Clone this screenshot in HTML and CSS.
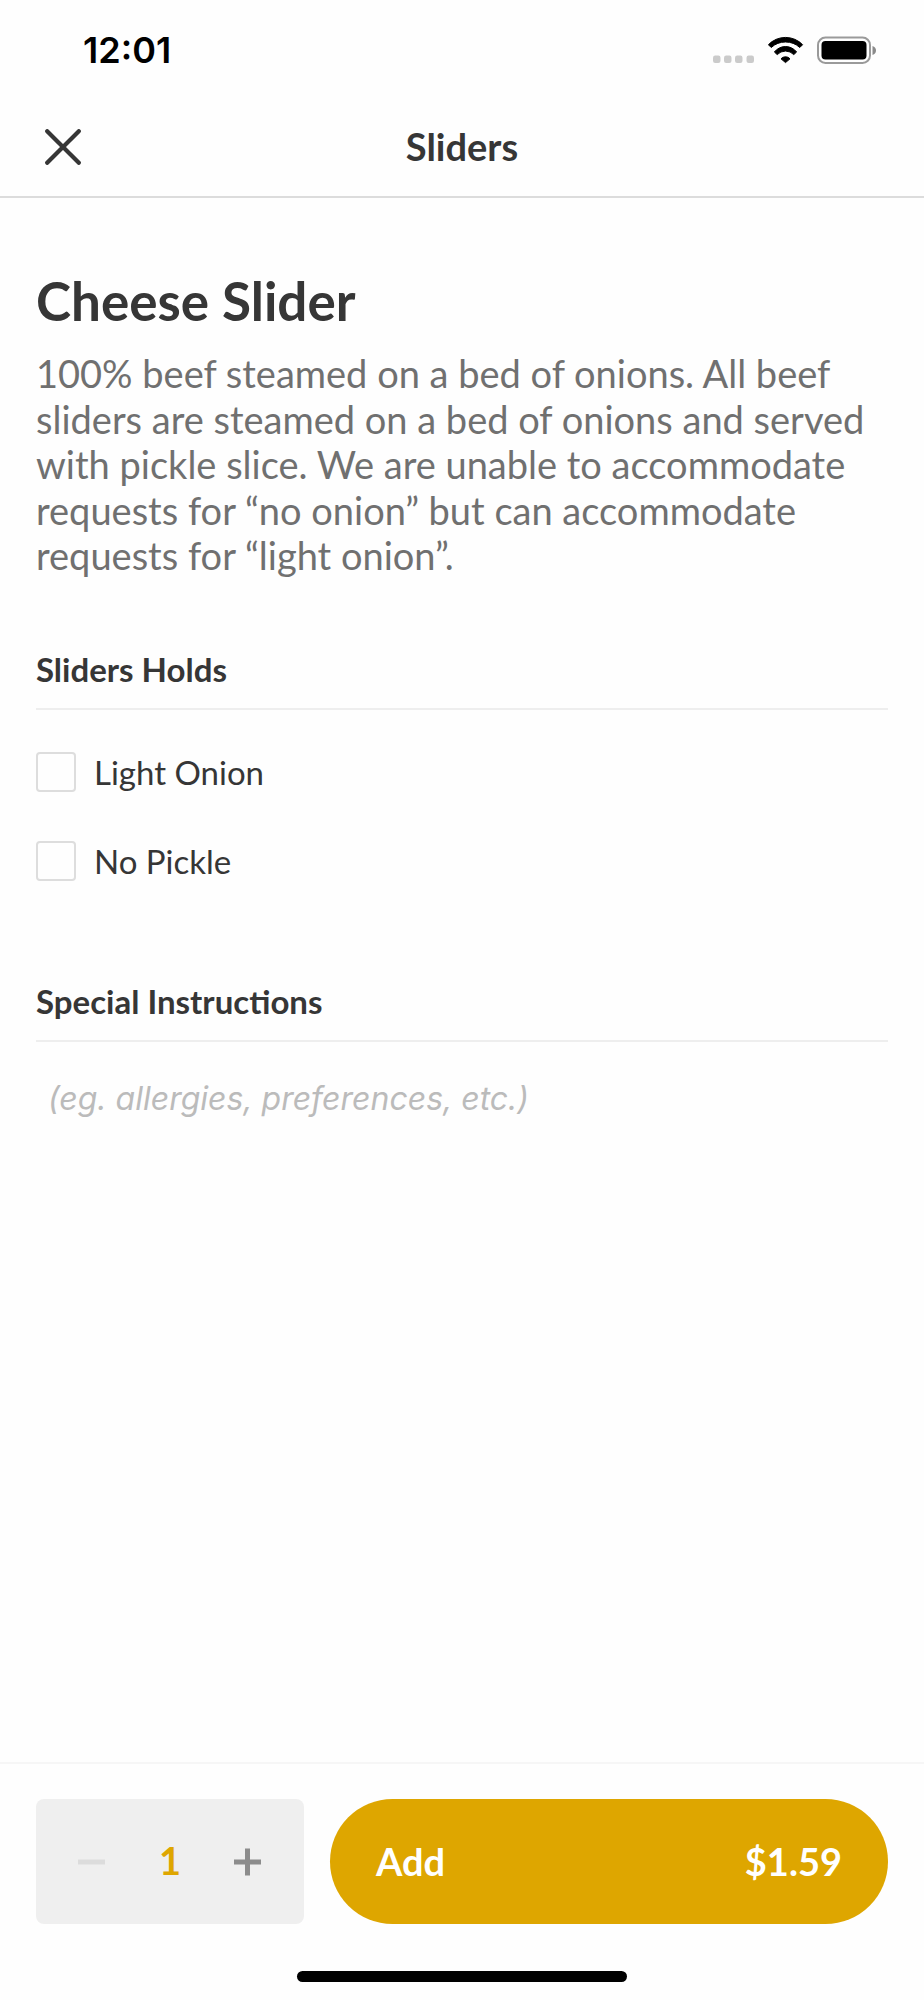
FILE: index.html
```
<!DOCTYPE html>
<html lang="en">
<head>
  <meta charset="UTF-8">
  <meta name="viewport" content="width=device-width, initial-scale=1">
  <title>Sliders</title>
  <link rel="stylesheet" href="styles.css">
</head>
<body>
  <header class="top">
    <div class="status-bar">
      <span class="time">12:01</span>
      <div class="status-icons">
        <svg class="signal" width="42" height="28" viewBox="0 0 42 28" fill="#cbcbcb">
          <rect x="0" y="19.500" width="7.500" height="7.500" rx="2.2"/>
          <rect x="11" y="19.500" width="7.500" height="7.500" rx="2.2"/>
          <rect x="22" y="19.500" width="7.500" height="7.500" rx="2.2"/>
          <rect x="33.500" y="19.500" width="7.500" height="7.500" rx="2.2"/>
        </svg>
        <svg class="wifi" width="36" height="28" viewBox="0 -1 36 28" stroke="#000" stroke-linejoin="round">
          <path d="M.4 7.700a23.700 23.700 0 0 1 34.200 0l-2.800 2.800a21.300 21.300 0 0 0-28.600 0z"/>
          <path d="M6.400 15a14 14 0 0 1 22.200 0l-2.800 2.600a11.500 11.500 0 0 0-16.600 0z"/>
          <path d="M17.500 25.600l-4.500-3.800a6 6 0 0 1 9 0z"/>
        </svg>
        <svg class="battery" width="60" height="28" viewBox="0 0 60 28">
          <rect x="1" y="1.500" width="52" height="25.500" rx="7.500" fill="none" stroke="#9a9a9a" stroke-width="2"/>
          <rect x="4.500" y="5" width="45" height="18.500" rx="4"/>
          <path d="M55.500 10q3.500 1.200 3.500 4.500t-3.500 4.500z" fill="#8a8a8a"/>
        </svg>
      </div>
    </div>
    <div class="nav">
      <button class="close" type="button" aria-label="Close">
        <svg width="36" height="36" viewBox="0 0 36 36">
          <path d="M2.200 2.200l31.600 31.600M33.800 2.200L2.200 33.800" stroke="#363636" stroke-width="4.200" stroke-linecap="round"/>
        </svg>
      </button>
      <h1 class="nav-title">Sliders</h1>
    </div>
  </header>

  <main class="content">
    <h2 class="item-name">Cheese Slider</h2>
    <p class="description">100% beef steamed on a bed of onions. All beef sliders are steamed on a bed of onions and served with pickle slice. We are unable to accommodate requests for “no onion” but can accommodate requests for “light onion”.</p>

    <section class="group">
      <h3 class="group-title">Sliders Holds</h3>
      <div class="options">
        <label class="option"><input type="checkbox" name="light-onion"> Light Onion</label>
        <label class="option"><input type="checkbox" name="no-pickle"> No Pickle</label>
      </div>
    </section>

    <section class="group">
      <h3 class="group-title"><label for="notes">Special Instructions</label></h3>
      <textarea id="notes" class="notes" rows="3" placeholder="(eg. allergies, preferences, etc.)"></textarea>
    </section>
  </main>

  <footer class="bottom">
    <div class="actions">
      <div class="stepper">
        <button id="minus" type="button" aria-label="Remove one" disabled>
          <svg width="28" height="28" viewBox="0 0 28 28"><path d="M0 14h27" stroke="currentColor" stroke-width="5"/></svg>
        </button>
        <span id="count" class="count">1</span>
        <button id="plus" type="button" aria-label="Add one">
          <svg width="28" height="28" viewBox="0 0 28 28"><path d="M0 14h27M13.500 .5v27" stroke="currentColor" stroke-width="5"/></svg>
        </button>
      </div>
      <button class="add" type="button"><span>Add</span><span id="price">$1.59</span></button>
    </div>
    <div class="home-bar"></div>
  </footer>

  <script>
    const unitPrice = 1.59;
    let count = 1;

    document.getElementById('minus').addEventListener('click', () => changeCount(-1));
    document.getElementById('plus').addEventListener('click', () => changeCount(1));

    function changeCount(step) {
      count = Math.max(1, count + step);
      document.getElementById('count').textContent = count;
      document.getElementById('price').textContent = `$${(unitPrice * count).toFixed(2)}`;
      document.getElementById('minus').disabled = count === 1;
    }
  </script>
</body>
</html>
```
FILE: styles.css
```
* {
  box-sizing: border-box;
}

body {
  margin: 0;
  min-height: 100vh;
  display: flex;
  flex-direction: column;
  background: #fefefe;
  color: #363636;
  font-family: Lato, sans-serif;
  font-size: 33px;
}

h1, h2, h3, p {
  margin: 0;
}

button {
  padding: 0;
  border: 0;
  background: none;
  font-family: inherit;
  cursor: pointer;
}

svg {
  display: block;
}

.top {
  border-bottom: 2px solid #dcdcdc;
}

.status-bar {
  display: flex;
  justify-content: space-between;
  align-items: center;
  height: 100px;
  padding: 0 47px 0 83px;
  color: #000;
}

.time {
  font-family: Inter, sans-serif;
  font-size: 36px;
  font-weight: 600;
}

.status-icons {
  display: flex;
  gap: 13px;
}

.nav {
  display: grid;
  grid-template-columns: 36px 1fr 36px;
  align-items: center;
  height: 96px;
  padding: 0 45px 2px;
}

.nav-title {
  font-size: 38px;
  font-weight: 700;
  line-height: 44px;
  padding-bottom: 2px;
  text-align: center;
}

.content {
  flex: 1;
  padding: 69px 36px 0;
}

.item-name {
  font-size: 53px;
  font-weight: 700;
  line-height: 68px;
}

.description {
  margin-top: 16px;
  color: #707070;
  font-size: 38px;
  line-height: 1.2;
}

.group {
  margin-top: 68px;
}

.group-title {
  padding-bottom: 17px;
  border-bottom: 2px solid #eee;
  font-size: 33px;
  font-weight: 700;
  line-height: 44px;
}

.options {
  display: flex;
  flex-direction: column;
  gap: 49px;
  padding: 42px 0 30px;
}

.option {
  display: flex;
  align-items: center;
  gap: 18px;
  line-height: 40px;
}

.option input {
  appearance: none;
  width: 40px;
  height: 40px;
  margin: 0;
  border: 2px solid #ddd;
  border-radius: 4px;
}

.option input:checked {
  background: #dea600;
}

.notes {
  display: block;
  width: 100%;
  margin-top: 35px;
  padding: 0 12px;
  border: 0;
  outline: 0;
  background: none;
  resize: none;
  color: #363636;
  font-family: Inter, sans-serif;
  font-size: 32px;
  line-height: 44px;
}

.notes::placeholder {
  color: #bbb;
  font-style: italic;
}

.bottom {
  padding: 35px 36px 18px;
  border-top: 2px solid #f6f6f6;
}

.actions {
  display: flex;
  gap: 26px;
}

.stepper {
  display: flex;
  justify-content: space-between;
  align-items: center;
  width: 268px;
  height: 125px;
  padding: 0 42px;
  border-radius: 8px;
  background: #efefef;
}

.stepper button {
  color: #8c8c8c;
}

.stepper button:disabled {
  color: #dcdcdc;
}

.count {
  padding-bottom: 4px;
  color: #dea600;
  font-size: 38px;
  font-weight: 700;
}

.add {
  flex: 1;
  display: flex;
  justify-content: space-between;
  align-items: center;
  height: 125px;
  padding: 0 46px 2px;
  border-radius: 63px;
  background: #dea600;
  color: #fff;
  font-size: 38px;
  font-weight: 700;
}

.home-bar {
  width: 330px;
  height: 11px;
  margin: 47px auto 0;
  border-radius: 6px;
  background: #000;
}
```
